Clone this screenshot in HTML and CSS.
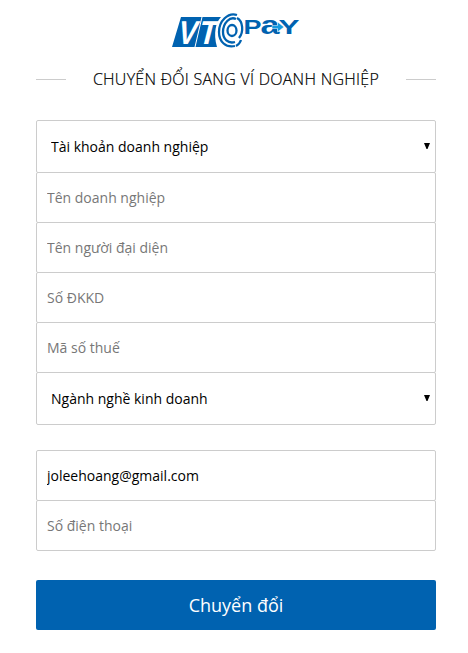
FILE: index.html
```
<!DOCTYPE html>
<html lang="vi">
<head>
  <meta charset="UTF-8">
  <meta name="viewport" content="width=device-width, initial-scale=1.0">
  <title>Chuyển đổi sang ví doanh nghiệp</title>
  <link rel="stylesheet" href="styles.css">
</head>
<body>

  <div class="container">
    <svg class="logo" width="130" height="36" viewBox="0 0 130 36" role="img" aria-label="VTC Pay">
      <path class="logo-tile" d="M10 4H50C45 9 42 20 46 34H1Z"/>
      <text class="logo-vt" transform="translate(5 30.500) skewX(-14)" textLength="19" lengthAdjust="spacingAndGlyphs">V</text>
      <text class="logo-vt" transform="translate(26 30.500) skewX(-14)" textLength="18" lengthAdjust="spacingAndGlyphs">T</text>
      <path class="logo-gap" d="M31 4L24 34"/>
      <!-- vòng sóng chữ C -->
      <g class="logo-rings">
        <path d="M66 2C57 -1 48 8 48 19C48 29 55 35 64 33"/>
        <path d="M65 6C59 3 52 10 52 19C52 26 57 31 64 29"/>
        <path d="M66 5C72 8 73 19 68 25"/>
        <path d="M70 27C69 30 67 32 65 33"/>
        <ellipse cx="61" cy="17.500" rx="4.500" ry="5.500"/>
      </g>
      <g class="logo-pay">
        <text x="72.500" y="21" textLength="18" lengthAdjust="spacingAndGlyphs">P</text>
        <text class="logo-pay-a" x="89.500" y="21" textLength="19" lengthAdjust="spacingAndGlyphs">a</text>
        <text x="107.500" y="21" textLength="21" lengthAdjust="spacingAndGlyphs">Y</text>
      </g>
      <path class="logo-arrow" d="M101 12.500H106.500V9L113 14L106.500 19V15.500H101Z"/>
    </svg>

    <h1>Chuyển đổi sang ví doanh nghiệp</h1>

    <form id="convertForm">
      <div class="group">
        <select name="accountType">
          <option>Tài khoản doanh nghiệp</option>
        </select>
        <input type="text" name="company" placeholder="Tên doanh nghiệp">
        <input type="text" name="representative" placeholder="Tên người đại diện">
        <input type="text" name="license" placeholder="Số ĐKKD">
        <input type="text" name="taxCode" placeholder="Mã số thuế">
        <select name="industry">
          <option>Ngành nghề kinh doanh</option>
        </select>
      </div>

      <div class="group">
        <input type="email" name="email" value="joleehoang@gmail.com">
        <input type="tel" name="phone" placeholder="Số điện thoại">
      </div>

      <button type="submit">Chuyển đổi</button>
    </form>
  </div>

</body>
</html>
```
FILE: styles.css
```
* {
  box-sizing: border-box;
}
body {
  font-family: "Open Sans", sans-serif;
  margin: 0;
  background-color: #fff;
}
.container {
  width: 400px;
  margin: 0 0 0 36px;
  padding-top: 13px;
}
.logo {
  display: block;
  margin: 0 auto 0 135px;
  overflow: visible;
}
.logo-tile {
  fill: #0062b0;
}
.logo-vt {
  font: bold 33px "Liberation Sans", sans-serif;
  fill: #fff;
}
.logo-gap {
  stroke: #fff;
  stroke-width: 1;
}
.logo-rings {
  fill: none;
  stroke: #0062b0;
  stroke-width: 2.3;
}
.logo-pay {
  font: bold 20px "Liberation Sans", sans-serif;
  fill: #0062b0;
}
.logo-pay-a {
  font-size: 25px;
}
.logo-arrow {
  fill: #159be0;
  stroke: #fff;
  stroke-width: .5;
}
h1 {
  display: flex;
  align-items: center;
  justify-content: space-between;
  margin: 18px 0 0;
  height: 24px;
  font-size: 16px;
  font-weight: 300;
  letter-spacing: .27px;
  -webkit-text-stroke: .2px #000;
  color: #000;
  text-transform: uppercase;
  white-space: nowrap;
}
h1::before, h1::after {
  content: "";
  width: 30px;
  height: 1px;
  background-color: #ccc;
}
form {
  margin-top: 29px;
}
.group {
  margin-bottom: 26px;
}
input, select {
  display: block;
  width: 100%;
  height: 51px;
  margin: 0 0 -1px;
  padding: 0 10px;
  border: 1px solid #ccc;
  border-radius: 2px;
  background-color: #fff;
  font-family: inherit;
  font-size: 14px;
  color: #000;
  outline: none;
}
select {
  height: 53px;
  padding: 0 14px;
  appearance: none;
  /* mũi tên của ô chọn */
  background-image: url("data:image/svg+xml,%3Csvg xmlns='http://www.w3.org/2000/svg' width='6' height='6'%3E%3Cpath d='M0 0H6L3.500 6H2.500Z'/%3E%3C/svg%3E");
  background-repeat: no-repeat;
  background-position: right 5px top 22px;
}
input::placeholder {
  color: #777;
  opacity: 1;
}
button {
  display: block;
  width: 100%;
  height: 50px;
  margin-top: 30px;
  padding: 0;
  border: none;
  border-radius: 2px;
  background-color: #0062b0;
  color: #fff;
  font-family: inherit;
  font-size: 18px;
}
```
